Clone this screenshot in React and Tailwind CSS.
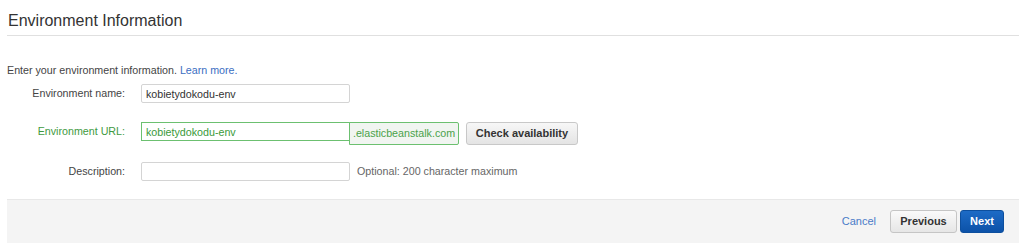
import React from 'react'

export default function App() {
  return (
    <div className="w-[1024px] h-[247px] bg-white pl-[7px] pr-[5px] font-['Liberation_Sans',Arial,sans-serif] text-[#444]">
      <div className="pt-[11px] pb-[4px] border-b border-[#e0e0e0]">
        <h1 className="text-[16px] leading-[20px] text-[#333] pl-[1px]">Environment Information</h1>
      </div>

      <p className="mt-[28px] text-[10.7px] leading-[13px]">
        Enter your environment information. <a className="text-[#3b6ec2]" href="#">Learn more.</a>
      </p>

      <div className="flex flex-col">
        <div className="flex items-center mt-[7px] h-[19px]">
          <label className="w-[118px] text-right text-[10.7px] text-[#444]">Environment name:</label>
          <input
            className="ml-[16px] w-[209px] h-[19px] border border-[#d4d4d4] rounded-[2px] px-[4px] text-[10.7px] text-[#333] outline-none"
            defaultValue="kobietydokodu-env"
          />
        </div>

        <div className="flex items-start mt-[19px] h-[23px]">
          <label className="w-[118px] h-[19px] flex items-center justify-end text-[10.7px] text-[#3f9a3f]">Environment URL:</label>
          <input
            className="ml-[16px] w-[209px] h-[19px] border border-[#6cc070] px-[4px] text-[10.7px] text-[#3a9a3a] outline-none"
            defaultValue="kobietydokodu-env"
          />
          <span className="w-[110px] h-[23px] border border-[#6cc070] rounded-r-[2px] bg-[#f1f5f1] flex items-center justify-center text-[10.7px] text-[#4aa24a] -ml-px">
            .elasticbeanstalk.com
          </span>
          <button className="ml-[7px] w-[112px] h-[23px] rounded-[3px] border border-[#c8c8c8] bg-gradient-to-b from-[#f7f7f7] to-[#e4e4e4] text-[11px] font-bold text-[#333]">
            Check availability
          </button>
        </div>

        <div className="flex items-center mt-[17px] h-[19px]">
          <label className="w-[118px] text-right text-[10.7px] text-[#444]">Description:</label>
          <input className="ml-[16px] w-[209px] h-[19px] border border-[#d4d4d4] rounded-[2px] px-[4px] text-[10.7px] outline-none" />
          <span className="ml-[7px] text-[10.7px] text-[#666]">Optional: 200 character maximum</span>
        </div>
      </div>

      <div className="mt-[18px] h-[44px] bg-[#f4f4f4] border-t border-[#e8e8e8] flex items-center justify-end pr-[15px]">
        <a href="#" className="text-[11px] text-[#4a7bc8] mr-[14px]">Cancel</a>
        <button className="w-[67px] h-[23px] rounded-[3px] border border-[#c5c5c5] bg-gradient-to-b from-[#fafafa] to-[#e6e6e6] text-[11px] font-bold text-[#333]">
          Previous
        </button>
        <button className="ml-[3px] w-[44px] h-[23px] rounded-[3px] border border-[#0d4f9e] bg-gradient-to-b from-[#1d6bc6] to-[#0c52a8] text-[11px] font-bold text-white">
          Next
        </button>
      </div>
    </div>
  )
}
